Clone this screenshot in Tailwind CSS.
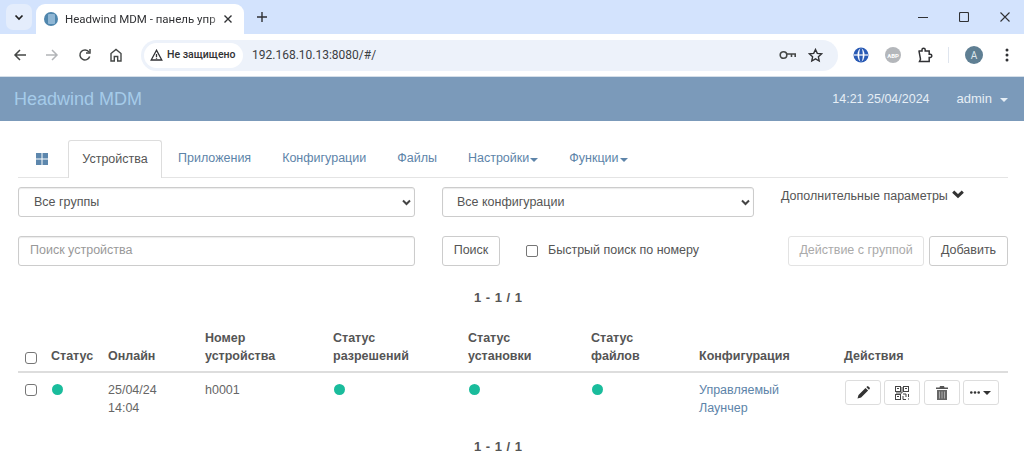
<!DOCTYPE html>
<html lang="ru">
<head>
    <meta charset="UTF-8"/>
    <title>Headwind MDM - панель управления</title>
    <script src="https://cdn.jsdelivr.net/npm/@tailwindcss/browser@4"></script>
</head>
<body class="bg-white font-['Liberation_Sans',Arial,sans-serif] text-[12.5px] text-[#555] overflow-hidden">

    <!-- Tab strip -->
    <div class="h-[34px] bg-[#d3e3fd] flex items-end relative font-['Roboto','Noto_Sans',sans-serif]">
        <div class="w-[26px] h-[26px] ml-[6px] mb-[4px] rounded-[7px] bg-[#e4edfc] flex items-center justify-center">
            <svg width="10" height="10" viewBox="0 0 10 10" fill="none" stroke="#1f1f1f" stroke-width="1.7"><path d="M1.5 3.5 5 7l3.5-3.5"/></svg>
        </div>
        <div class="w-[208px] h-[30px] ml-[4px] bg-white rounded-t-[9px] flex items-center pl-[8px] pb-[1px]">
            <span class="w-[14px] h-[14px] rounded-full bg-[#4f86ad] flex items-center justify-center shrink-0"><span class="w-[7px] h-[10px] rounded-[1px] bg-[#8fb6d4]"></span></span>
            <span class="ml-[7px] w-[160px] h-[16px] leading-[16px] overflow-hidden whitespace-nowrap text-[11.5px] text-[#303134] [mask-image:linear-gradient(to_right,black_90%,transparent)]">Headwind MDM - панель упр</span>
            <svg class="ml-[-2px]" width="10" height="10" viewBox="0 0 10 10" stroke="#303134" stroke-width="1.4"><path d="M1.5 1.5l7 7M8.5 1.5l-7 7"/></svg>
        </div>
        <svg class="ml-[12px] mb-[11px]" width="12" height="12" viewBox="0 0 12 12" stroke="#303134" stroke-width="1.4"><path d="M6 1v10M1 6h10"/></svg>
        <div class="ml-auto flex items-center mb-[12px] pr-[14px] gap-[31px]">
            <svg width="10" height="10" viewBox="0 0 10 10" stroke="#303134"><path d="M0 5.5h10"/></svg>
            <svg width="10" height="10" viewBox="0 0 10 10" stroke="#303134" stroke-width="1.1" fill="none"><rect x="0.5" y="0.5" width="9" height="9" rx="1"/></svg>
            <svg width="10" height="10" viewBox="0 0 10 10" stroke="#303134" stroke-width="1.1"><path d="M0.5 0.5l9 9M9.5 0.5l-9 9"/></svg>
        </div>
    </div>

    <!-- Toolbar -->
    <div class="h-[43px] bg-white border-b border-[#d5dfe9] flex items-center pl-[13px] font-['Roboto','Noto_Sans',sans-serif]">
        <svg width="14" height="14" viewBox="0 0 14 14" fill="none" stroke="#444746" stroke-width="1.5"><path d="M13 7H2M7 2 2 7l5 5"/></svg>
        <svg class="ml-[18px]" width="14" height="14" viewBox="0 0 14 14" fill="none" stroke="#b3b5b8" stroke-width="1.5"><path d="M1 7h11M7 2l5 5-5 5"/></svg>
        <svg class="ml-[19px]" width="14" height="14" viewBox="0 0 14 14" fill="none" stroke="#444746" stroke-width="1.5"><path d="M11.7 8.5a5 5 0 1 1-.6-4.4"/><path d="M12 1v4H8" /></svg>
        <svg class="ml-[17px]" width="14" height="14" viewBox="0 0 14 14" fill="none" stroke="#444746" stroke-width="1.4"><path d="M2 13V5.5L7 1.5l5 4V13H8.7V8.5H5.3V13z"/></svg>
        <div class="ml-[18px] w-[697px] h-[31px] rounded-full bg-[#edf2fa] flex items-center pl-[3px] pr-[15px]">
            <div class="w-[99px] h-[25px] rounded-full bg-white flex items-center pl-[6px] text-[10.5px] font-medium text-[#303134] whitespace-nowrap">
                <svg width="13" height="12" viewBox="0 0 13 12" fill="none" stroke="#303134" stroke-width="1.3"><path d="M6.5 1.2 1.2 11h10.6zM6.5 5v3M6.5 8.8v1"/></svg>
                <span class="ml-[4px]">Не защищено</span>
            </div>
            <span class="ml-[9px] text-[12px] text-[#3c4043]">192.168.10.13:8080/#/</span>
            <svg class="ml-auto" width="17" height="10" viewBox="0 0 17 10" fill="none" stroke="#444746" stroke-width="1.6"><circle cx="4.5" cy="5" r="3.3"/><path d="M8 4h8.2v3M12.5 4v3"/></svg>
            <svg class="ml-[12px]" width="15" height="15" viewBox="0 0 15 15" fill="none" stroke="#303134" stroke-width="1.4"><path d="m7.5 1.5 1.8 3.9 4.2.5-3.1 2.9.8 4.2-3.7-2.1-3.7 2.1.8-4.2L1.5 5.9l4.2-.5z"/></svg>
        </div>
        <svg class="ml-[15px]" width="16" height="16" viewBox="0 0 16 16"><circle cx="8" cy="8" r="7.5" fill="#2a5bb5"/><ellipse cx="8" cy="8" rx="3.5" ry="6.5" fill="#fff"/><ellipse cx="8" cy="8" rx="1.8" ry="7" fill="#2a5bb5"/><path d="M1 8h14" stroke="#fff" stroke-width="1.2"/></svg>
        <div class="ml-[16px] w-[16px] h-[16px] rounded-full bg-[#b4b7bb] text-white text-[6px] font-bold flex items-center justify-center">ABP</div>
        <svg class="ml-[16px]" width="16" height="16" viewBox="0 0 16 16" fill="none" stroke="#303134" stroke-width="1.5"><path d="M1.5 4H5V2.8a1.6 1.6 0 0 1 3.2 0V4h4v3.2h1a1.6 1.6 0 0 1 0 3.2h-1v4H2.5l1-2.2-1.5-8z"/></svg>
        <div class="ml-[15px] w-px h-[16px] bg-[#dfe5ee]"></div>
        <div class="ml-[16px] w-[18px] h-[18px] rounded-full bg-[#5f7f93] text-[#dfe7ec] text-[10px] flex items-center justify-center">A</div>
        <svg class="ml-[22px]" width="4" height="14" viewBox="0 0 4 14" fill="#303134"><circle cx="2" cy="2" r="1.5"/><circle cx="2" cy="7" r="1.5"/><circle cx="2" cy="12" r="1.5"/></svg>
    </div>

    <!-- Navbar -->
    <div class="h-[44px] bg-[#7b9aba] flex items-center px-[14px]">
        <span class="text-[18px] text-[#a5cbe9]">Headwind MDM</span>
        <span class="ml-auto mr-[1px] text-[12.5px] text-[#e6eef5]">14:21 25/04/2024</span>
        <span class="ml-[26px] text-[13px] text-[#e6eef5]">admin</span>
        <span class="ml-[8px] mr-[2px] mt-[2px] w-0 h-0 border-x-[4px] border-x-transparent border-t-[4px] border-t-[#e6eef5]"></span>
    </div>

    <div class="pl-[18px] pr-[16px] pt-[19px]">
        <!-- Tabs -->
        <div class="flex h-[38px] border-b border-[#e4e4e4] text-[#5d84a9]">
            <div class="w-[50px] pr-[2px] flex items-center justify-center">
                <svg width="12" height="12" viewBox="0 0 12 12" fill="#5d87ad"><rect width="5.5" height="5.5"/><rect x="6.5" width="5.5" height="5.5"/><rect y="6.5" width="5.5" height="5.5"/><rect x="6.5" y="6.5" width="5.5" height="5.5"/></svg>
            </div>
            <div class="w-[94px] h-[38px] border border-b-0 border-[#ddd] rounded-t-[3px] bg-white text-[#555] flex items-center justify-center">Устройства</div>
            <div class="ml-[16px] flex items-center">Приложения</div>
            <div class="ml-[31px] flex items-center">Конфигурации</div>
            <div class="ml-[31px] flex items-center">Файлы</div>
            <div class="ml-[31px] flex items-center">Настройки<span class="ml-[1px] mt-[2px] w-0 h-0 border-x-[4px] border-x-transparent border-t-[4px] border-t-[#5d84a9]"></span></div>
            <div class="ml-[31px] flex items-center">Функции<span class="ml-[1px] mt-[2px] w-0 h-0 border-x-[4px] border-x-transparent border-t-[4px] border-t-[#5d84a9]"></span></div>
        </div>

        <!-- Filters -->
        <div class="flex mt-[9px] h-[30px]">
            <div class="w-[397px] border border-[#ccc] rounded-[3px] shadow-[inset_0_1px_1px_rgba(0,0,0,0.08)] flex items-center pl-[15px] pr-[3px]">
                Все группы
                <svg class="ml-auto" width="9" height="7" viewBox="0 0 9 7" fill="none" stroke="#444" stroke-width="2"><path d="M1 1.5l3.5 3.5L8 1.5"/></svg>
            </div>
            <div class="ml-[27px] w-[312px] border border-[#ccc] rounded-[3px] shadow-[inset_0_1px_1px_rgba(0,0,0,0.08)] flex items-center pl-[14px] pr-[3px]">
                Все конфигурации
                <svg class="ml-auto" width="9" height="7" viewBox="0 0 9 7" fill="none" stroke="#444" stroke-width="2"><path d="M1 1.5l3.5 3.5L8 1.5"/></svg>
            </div>
            <div class="ml-[27px] flex items-start h-[16px] leading-[16px] mt-[1px]">
                Дополнительные параметры
                <svg class="ml-[4px] mt-[2px]" width="12" height="9" viewBox="0 0 12 9" fill="none" stroke="#333" stroke-width="3"><path d="M1.2 1.6 6 6.2l4.8-4.6"/></svg>
            </div>
        </div>

        <div class="flex mt-[18px] h-[31px] items-center">
            <div class="w-[397px] h-[30px] border border-[#ccc] rounded-[3px] shadow-[inset_0_1px_1px_rgba(0,0,0,0.08)] flex items-center pl-[11px] text-[#999]">Поиск устройства</div>
            <div class="ml-[27px] w-[58px] h-[30px] border border-[#ccc] rounded-[3px] flex items-center justify-center">Поиск</div>
            <div class="ml-[26px] w-[12px] h-[12px] border border-[#767676] rounded-[2px]"></div>
            <span class="ml-[10px]">Быстрый поиск по номеру</span>
            <div class="ml-auto w-[136px] h-[30px] border border-[#e3e3e3] rounded-[3px] flex items-center justify-center text-[#aaa]">Действие с группой</div>
            <div class="ml-[5px] w-[79px] h-[30px] border border-[#ccc] rounded-[3px] flex items-center justify-center">Добавить</div>
        </div>

        <div class="mt-[24px] pr-[30px] h-[16px] text-center font-bold text-[13px] text-[#555] leading-[16px] [word-spacing:1px]">1 - 1 / 1</div>

        <!-- Devices table -->
        <div class="mt-[23px] grid grid-cols-[33px_57px_97px_128px_135px_123px_108px_145px_1fr] border-b-2 border-[#ddd] h-[44px] font-bold leading-[18px] items-end pb-[6px]">
            <div class="pl-[7px] pb-[1px]"><div class="w-[12px] h-[12px] border border-[#767676] rounded-[3px]"></div></div>
            <div>Статус</div>
            <div>Онлайн</div>
            <div>Номер<br/>устройства</div>
            <div>Статус<br/>разрешений</div>
            <div>Статус<br/>установки</div>
            <div>Статус<br/>файлов</div>
            <div>Конфигурация</div>
            <div>Действия</div>
        </div>
        <div class="grid grid-cols-[33px_57px_97px_128px_135px_123px_108px_145px_1fr] pt-[8px] leading-[18px] text-[#666]">
            <div class="pl-[7px] pt-[3px]"><div class="w-[12px] h-[12px] border border-[#767676] rounded-[3px]"></div></div>
            <div class="pt-[3px]"><div class="ml-[1px] w-[11px] h-[11px] rounded-full bg-[#1abc9c]"></div></div>
            <div>25/04/24<br/>14:04</div>
            <div>h0001</div>
            <div class="pt-[3px]"><div class="ml-[1px] w-[11px] h-[11px] rounded-full bg-[#1abc9c]"></div></div>
            <div class="pt-[3px]"><div class="ml-[1px] w-[11px] h-[11px] rounded-full bg-[#1abc9c]"></div></div>
            <div class="pt-[3px]"><div class="ml-[1px] w-[11px] h-[11px] rounded-full bg-[#1abc9c]"></div></div>
            <div class="text-[#5d84a9]">Управляемый<br/>Лаунчер</div>
            <div class="flex gap-[3.33px] mt-[-1px] ml-[1px]">
                <div class="w-[36px] h-[25px] border border-[#ddd] rounded-[3px] flex items-center justify-center">
                    <svg width="13" height="13" viewBox="0 0 13 13" fill="#333"><path d="M0.5 12.5l1-3.6 7-7 2.6 2.6-7 7zM9.3 1.1l.8-.7a1 1 0 0 1 1.3 0l1.2 1.2a1 1 0 0 1 0 1.3l-.7.8z"/></svg>
                </div>
                <div class="w-[36px] h-[25px] border border-[#ddd] rounded-[3px] flex items-center justify-center">
                    <svg width="14" height="14" viewBox="0 0 14 14" fill="none" stroke="#444"><rect x="0.5" y="0.5" width="5" height="5"/><rect x="8.5" y="0.5" width="5" height="5"/><rect x="0.5" y="8.5" width="5" height="5"/><path d="M2 2.5h2M10 2.5h2M2 10.5h2M7 1v6H1M8 8h3v3M13.5 8v3M8 10v3.5h3M13 13h1" /></svg>
                </div>
                <div class="w-[36px] h-[25px] border border-[#ddd] rounded-[3px] flex items-center justify-center">
                    <svg width="12" height="14" viewBox="0 0 12 14"><path d="M4 0h4l.5 1.5H12V3H0V1.5h3.5z" fill="#555"/><path d="M1 4h10v10H1z" fill="#666"/><path d="M3.5 5.5v7M6 5.5v7M8.5 5.5v7" stroke="#aaa"/></svg>
                </div>
                <div class="w-[36px] h-[25px] border border-[#ddd] rounded-[3px] flex items-center justify-center gap-[3px]">
                    <svg width="10" height="3" viewBox="0 0 10 3" fill="#333"><circle cx="1.3" cy="1.5" r="1.3"/><circle cx="5" cy="1.5" r="1.3"/><circle cx="8.7" cy="1.5" r="1.3"/></svg>
                    <span class="w-0 h-0 border-x-[4px] border-x-transparent border-t-[4px] border-t-[#333]"></span>
                </div>
            </div>
        </div>

        <div class="mt-[22px] pr-[30px] text-center font-bold text-[13px] text-[#555] leading-[16px] [word-spacing:1px]">1 - 1 / 1</div>
    </div>

</body>
</html>
